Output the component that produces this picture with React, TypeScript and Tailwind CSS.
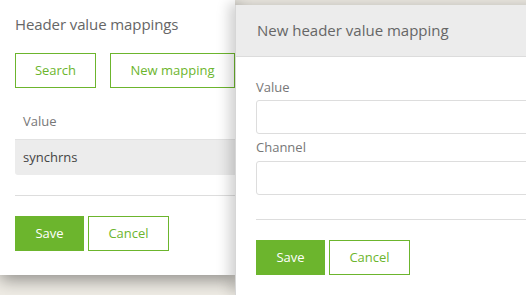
export default function App() {
  return (
    <div
      className="relative w-[526px] h-[295px] overflow-hidden bg-[#efece5] text-[13px]"
      style={{ fontFamily: '"Open Sans", "Noto Sans", sans-serif' }}
    >
      <div className="flex h-full">
        {/* list panel */}
        <div className="w-[235px] shrink-0 flex flex-col">
          <div className="h-[275px] bg-white shadow-[0_5px_16px_rgba(0,0,0,0.4)] pl-[15px] pt-[13px] flex flex-col">
            <div className="text-[15px] text-[#666] leading-[22px] tracking-[-0.1px]">Header value mappings</div>

            <div className="flex gap-[14px] mt-[18px]">
              <button className="w-[81px] h-[35px] border border-[#6cb52d] text-[#6cb52d] bg-white">Search</button>
              <button className="w-[125px] h-[35px] border border-[#6cb52d] text-[#6cb52d] bg-white">New mapping</button>
            </div>

            <div className="mt-[17px] h-[35px] flex items-center pl-[8px] text-[#777] border-b border-[#e2e2e2]">Value</div>
            <div className="h-[35px] flex items-center pl-[8px] bg-[#ececec] text-[#444] rounded-bl-[3px]">synchrns</div>

            <div className="mt-[20px] border-t border-[#ddd]" />

            <div className="flex gap-[4px] mt-[20px]">
              <button className="w-[69px] h-[35px] bg-[#6cb52d] text-white">Save</button>
              <button className="w-[81px] h-[35px] border border-[#6cb52d] text-[#6cb52d] bg-white">Cancel</button>
            </div>
          </div>
        </div>

        {/* new mapping dialog */}
        <div className="relative flex-1 mt-[5px] bg-white border-l border-[#d6d6d6] shadow-[-6px_-2px_12px_rgba(0,0,0,0.18)] flex flex-col">
          <div className="h-[52px] bg-[#ececec] border-b border-[#dcdcdc] flex items-center pl-[21px] text-[15px] text-[#666]">
            New header value mapping
          </div>

          <div className="pl-[20px] flex flex-col">
            <label className="mt-[21px] text-[#777] leading-[18px]">Value</label>
            <input className="mt-[4px] h-[34px] w-[300px] border border-[#ddd] rounded-[3px] outline-none" />
            <label className="mt-[4px] text-[#777] leading-[18px]">Channel</label>
            <input className="mt-[5px] h-[34px] w-[300px] border border-[#ddd] rounded-[3px] outline-none" />

            <div className="mt-[24px] border-t border-[#ddd]" />

            <div className="flex gap-[4px] mt-[20px]">
              <button className="w-[69px] h-[35px] bg-[#6cb52d] text-white">Save</button>
              <button className="w-[81px] h-[35px] border border-[#6cb52d] text-[#6cb52d] bg-white">Cancel</button>
            </div>
          </div>
        </div>
      </div>
    </div>
  );
}
